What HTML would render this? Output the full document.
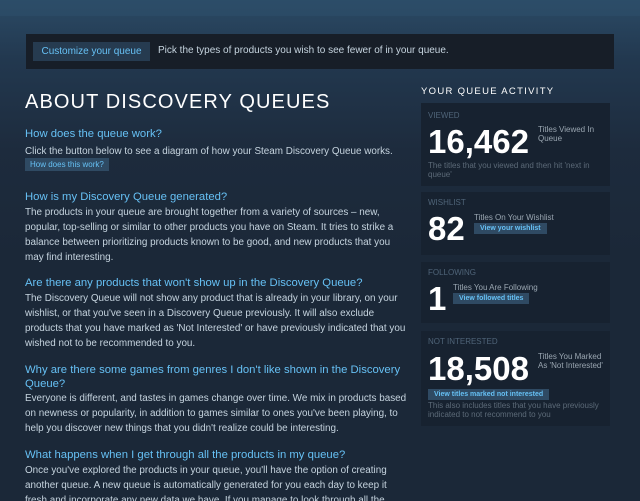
<!DOCTYPE html>
<html style="background:#1b2838;height:501px;overflow:hidden"><head><style>
*{margin:0;padding:0;box-sizing:border-box}
body{width:640px;height:501px;overflow:hidden;background:linear-gradient(180deg,#2b4a65 0px,#22384f 60px,#1d2b3d 150px,#1b2838 260px,#1b2838 501px);font-family:"Liberation Sans",sans-serif;position:relative;color:#c6d4df}
.a{position:absolute;white-space:nowrap}
.h{color:#66c0f4;font-size:11.3px}
.b{font-size:9.9px;color:#c6d4df;line-height:15px}
.btn{background:#2f4a63;color:#66c0f4;font-size:8px;padding:2px 5px}
.box{position:absolute;left:421px;width:189px;background:#172230}
.lab{position:absolute;left:7px;font-size:8px;color:#4f6478}
.num{position:absolute;font-weight:bold;color:#fff;font-size:33px;line-height:33px}
.sm{position:absolute;font-size:8px;color:#9aa6b1;line-height:9px}
.gr{position:absolute;font-size:8px;color:#5c6a78;line-height:9px}
.sb{position:absolute;background:#2f4a63;color:#66c0f4;font-size:7px;font-weight:bold;padding:2px 6px}
</style></head><body>
<div class="a" style="left:0;top:0;width:640px;height:16px;background:#2e4f6c;opacity:.5"></div>
<div class="a" style="left:26px;top:34px;width:588px;height:35px;background:#171e28"></div>
<div class="a" style="left:33px;top:42px;width:117px;height:19px;background:#263b50;color:#66c0f4;font-size:10px;line-height:19px;text-align:center">Customize your queue</div>
<div class="a" style="left:158px;top:45px;font-size:10px;color:#c6d4df">Pick the types of products you wish to see fewer of in your queue.</div>
<div class="a" style="left:25px;top:91px;font-size:20px;color:#fff;letter-spacing:1.1px">ABOUT DISCOVERY QUEUES</div>
<div class="a" style="left:421px;top:86px;font-size:9.5px;color:#fff;letter-spacing:1.3px">YOUR QUEUE ACTIVITY</div>

<div class="a h" style="left:25px;top:128px">How does the queue work?</div>
<div class="a b" style="left:25px;top:144px">Click the button below to see a diagram of how your Steam Discovery Queue works.</div>
<div class="a btn" style="left:25px;top:158px">How does this work?</div>

<div class="a h" style="left:25px;top:191px">How is my Discovery Queue generated?</div>
<div class="a b" style="left:25px;top:205px">The products in your queue are brought together from a variety of sources – new,<br>popular, top-selling or similar to other products you have on Steam. It tries to strike a<br>balance between prioritizing products known to be good, and new products that you<br>may find interesting.</div>

<div class="a h" style="left:25px;top:277px">Are there any products that won't show up in the Discovery Queue?</div>
<div class="a b" style="left:25px;top:291px">The Discovery Queue will not show any product that is already in your library, on your<br>wishlist, or that you've seen in a Discovery Queue previously. It will also exclude<br>products that you have marked as 'Not Interested' or have previously indicated that you<br>wished not to be recommended to you.</div>

<div class="a h" style="left:25px;top:363px;line-height:14px">Why are there some games from genres I don't like shown in the Discovery<br>Queue?</div>
<div class="a b" style="left:25px;top:391px">Everyone is different, and tastes in games change over time. We mix in products based<br>on newness or popularity, in addition to games similar to ones you've been playing, to<br>help you discover new things that you didn't realize could be interesting.</div>

<div class="a h" style="left:25px;top:449px">What happens when I get through all the products in my queue?</div>
<div class="a b" style="left:25px;top:463px">Once you've explored the products in your queue, you'll have the option of creating<br>another queue. A new queue is automatically generated for you each day to keep it<br>fresh and incorporate any new data we have. If you manage to look through all the</div>

<div class="box" style="top:103px;height:83px">
<div class="lab" style="top:8px">VIEWED</div>
<div class="num" style="left:7px;top:22px">16,462</div>
<div class="sm" style="left:117px;top:22px">Titles Viewed In<br>Queue</div>
<div class="gr" style="left:7px;top:58px">The titles that you viewed and then hit 'next in<br>queue'</div>
</div>
<div class="box" style="top:192px;height:63px">
<div class="lab" style="top:6px">WISHLIST</div>
<div class="num" style="left:7px;top:20px">82</div>
<div class="sm" style="left:53px;top:21px">Titles On Your Wishlist</div>
<div class="sb" style="left:53px;top:31px">View your wishlist</div>
</div>
<div class="box" style="top:262px;height:61px">
<div class="lab" style="top:6px">FOLLOWING</div>
<div class="num" style="left:7px;top:20px">1</div>
<div class="sm" style="left:32px;top:21px">Titles You Are Following</div>
<div class="sb" style="left:32px;top:31px">View followed titles</div>
</div>
<div class="box" style="top:331px;height:95px">
<div class="lab" style="top:6px">NOT INTERESTED</div>
<div class="num" style="left:7px;top:21px">18,508</div>
<div class="sm" style="left:117px;top:21px">Titles You Marked<br>As 'Not Interested'</div>
<div class="sb" style="left:7px;top:58px">View titles marked not interested</div>
<div class="gr" style="left:7px;top:70px">This also includes titles that you have previously<br>indicated to not recommend to you</div>
</div>
</body></html>
